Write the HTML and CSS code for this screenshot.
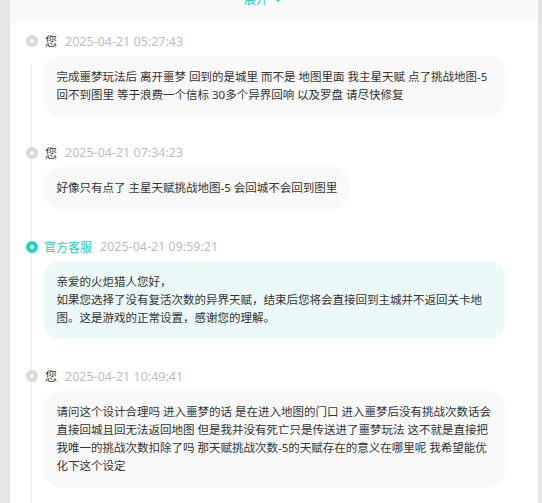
FILE: index.html
```html
<!DOCTYPE html>
<html lang="zh-CN">
<head>
<meta charset="utf-8">
<title>工单记录</title>
<link rel="stylesheet" href="styles.css">
</head>
<body>
<div class="panel">
  <div class="expand-bar">
    <div class="expand">
      <span>展开</span>
      <svg class="chev" width="10" height="10" viewBox="0 0 10 10"><polyline points="1.5,3 5,6.5 8.5,3" fill="none" stroke="currentColor" stroke-width="2.2" stroke-linecap="round" stroke-linejoin="round"/></svg>
    </div>
  </div>
  <div class="timeline">
    <div class="item">
      <span class="dot"></span>
      <div class="head"><span class="name">您</span><span class="time">2025-04-21 05:27:43</span></div>
      <div class="bubble">完成噩梦玩法后 离开噩梦 回到的是城里 而不是 地图里面 我主星天赋 点了挑战地图-5 回不到图里 等于浪费一个信标 30多个异界回响 以及罗盘 请尽快修复</div>
    </div>
    <div class="item">
      <span class="dot"></span>
      <div class="head"><span class="name">您</span><span class="time">2025-04-21 07:34:23</span></div>
      <div class="bubble">好像只有点了 主星天赋挑战地图-5 会回城不会回到图里</div>
    </div>
    <div class="item official">
      <span class="dot"></span>
      <div class="head"><span class="name">官方客服</span><span class="time">2025-04-21 09:59:21</span></div>
      <div class="bubble">亲爱的火炬猎人您好，<br>如果您选择了没有复活次数的异界天赋，结束后您将会直接回到主城并不返回关卡地图。这是游戏的正常设置，感谢您的理解。</div>
    </div>
    <div class="item">
      <span class="dot"></span>
      <div class="head"><span class="name">您</span><span class="time">2025-04-21 10:49:41</span></div>
      <div class="bubble">请问这个设计合理吗 进入噩梦的话 是在进入地图的门口 进入噩梦后没有挑战次数话会直接回城且回无法返回地图 但是我并没有死亡只是传送进了噩梦玩法 这不就是直接把我唯一的挑战次数扣除了吗 那天赋挑战次数-5的天赋存在的意义在哪里呢 我希望能优化下这个设定</div>
    </div>
  </div>
</div>
</body>
</html>
```

FILE: styles.css
```css
* { box-sizing: border-box; }
html, body {
  margin: 0;
  height: 100%;
}
body {
  background: #e5e5e5;
  font-family: "Noto Sans", "Noto Sans CJK SC", sans-serif;
  font-size: 11.5px;
  color: #333;
  overflow: hidden;
}
.panel {
  margin-left: 10px;
  width: 528px;
  min-height: 100%;
  background: #fff;
}
.expand-bar {
  height: 23px;
  background: #fafafa;
  overflow: hidden;
  display: flex;
  justify-content: center;
  padding-right: 21px;
}
.expand {
  margin-top: -10px;
  height: 20px;
  line-height: 20px;
  display: flex;
  align-items: center;
  gap: 5px;
  font-size: 12px;
  color: #19cfbf;
}
.chev { display: block; margin-top: -2px; }
.timeline {
  padding-top: 8px;
  background-image: linear-gradient(#ececec, #ececec);
  background-repeat: no-repeat;
  background-position: 21px 41px;
  background-size: 1px 100%;
}
.item {
  display: grid;
  grid-template-columns: 34px 461px;
  padding-bottom: 27.3px;
}
.dot {
  grid-column: 1;
  grid-row: 1;
  align-self: center;
  justify-self: start;
  margin-left: 15.5px;
  width: 12px;
  height: 12px;
  border-radius: 50%;
  border: 4px solid #d9d9d9;
  background: #fff;
}
.official .dot { border-color: #1dd3c3; }
.head {
  grid-column: 2;
  grid-row: 1;
  height: 20px;
  display: flex;
  align-items: center;
  gap: 8px;
  white-space: nowrap;
}
.name { color: #333; font-size: 12px; padding-left: 1px; }
.official .name { color: #19cfbf; padding-left: 0; }
.time { color: #bdbdbd; font-size: 12.5px; }
.bubble {
  grid-column: 2;
  grid-row: 2;
  justify-self: start;
  margin-top: 4.5px;
  padding: 12px 12px 12px 12.5px;
  line-height: 18px;
  background: #f9f9f9;
  border-radius: 16px;
  color: #333;
}
.official .bubble { background: #ebf9f9; }
```
